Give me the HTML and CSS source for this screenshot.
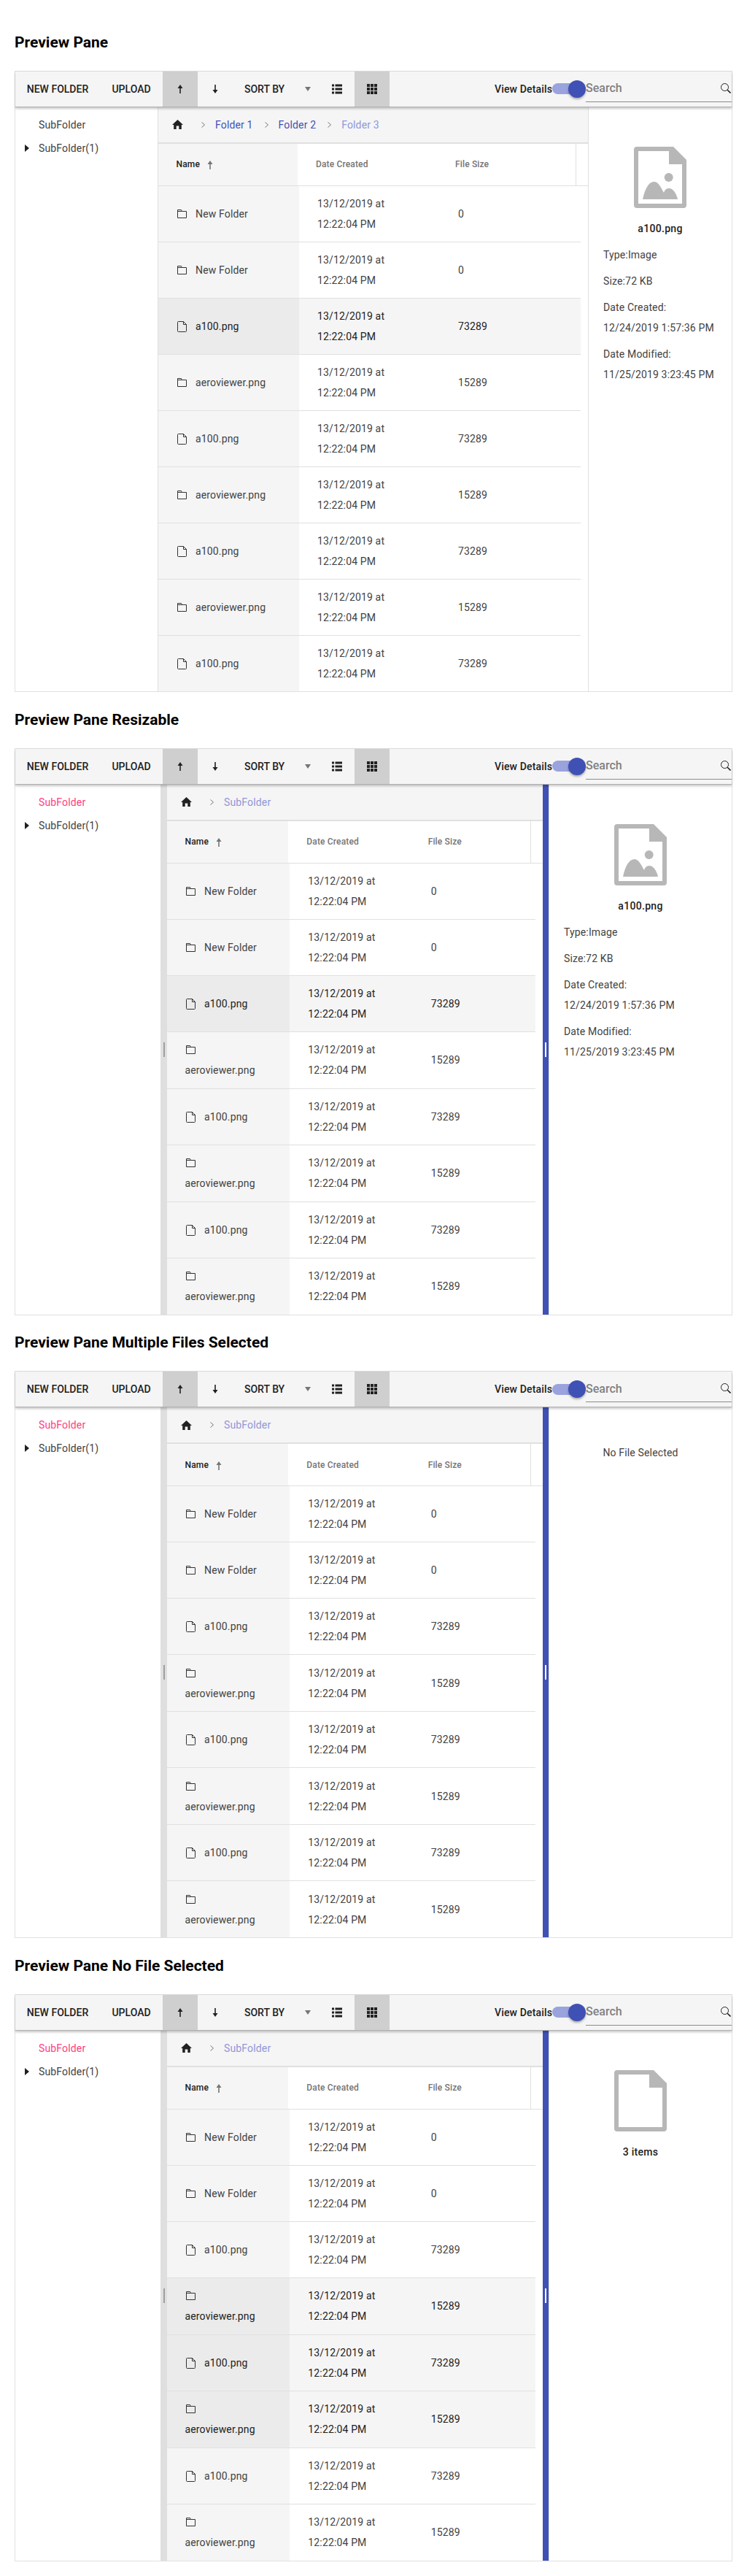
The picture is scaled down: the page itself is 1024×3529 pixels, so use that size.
FILE: index.html
```html
<!DOCTYPE html>
<html lang="en">
  <head>
    <meta charset="UTF-8" />
    <meta name="viewport" content="width=device-width, initial-scale=1.0" />
    <title>Preview Pane</title>
    <link rel="stylesheet" href="styles.css">
  </head>
  <body>
    <svg class="sprite">
      <symbol id="i-up" viewBox="0 0 8 12"><path d="M4 0L7.5 5H4.8V12H3.2V5H.5Z" /></symbol>
      <symbol id="i-down" viewBox="0 0 8 12"><path d="M4 12L7.5 7H4.8V0H3.2V7H.5Z" /></symbol>
      <symbol id="i-list" viewBox="0 0 14 13"><path d="M0 0H3V3H0ZM4.500 0H14V3H4.500ZM0 5H3V8H0ZM4.500 5H14V8H4.500ZM0 10H3V13H0ZM4.500 10H14V13H4.500Z" /></symbol>
      <symbol id="i-grid" viewBox="0 0 14 14"><path d="M0 0H4V4H0ZM5 0H9V4H5ZM10 0H14V4H10ZM0 5H4V9H0ZM5 5H9V9H5ZM10 5H14V9H10ZM0 10H4V14H0ZM5 10H9V14H5ZM10 10H14V14H10Z" /></symbol>
      <symbol id="i-search" viewBox="0 0 14 14"><circle cx="5.500" cy="5.500" r="5" fill="none" stroke="#212121" /><path d="M9.200 9.200L13.500 13.500" stroke="#212121" stroke-width="1.600" /></symbol>
      <symbol id="i-home" viewBox="0 0 15 13"><path d="M7.500 0L15 7H12.800V13H9.300V8.500H5.700V13H2.200V7H0Z" /></symbol>
      <symbol id="i-chev" viewBox="0 0 5 8"><path d="M.5 .5L4.500 4L.5 7.500" fill="none" stroke="#757575" /></symbol>
      <symbol id="i-folder" viewBox="0 0 13 12"><path d="M.5 .5H5.500L6.500 2.500H12.500V11.500H.5ZM.5 2.500H6.500" fill="none" stroke="#333" /></symbol>
      <symbol id="i-file" viewBox="0 0 13 15"><path d="M1.500 .5H8.500L12.500 4.500V13.500A1 1 0 0 1 11.500 14.500H1.500A1 1 0 0 1 .5 13.500V1.500A1 1 0 0 1 1.500 .5ZM8.500 .5V4.500H12.500" fill="none" stroke="#333" /></symbol>
      <symbol id="i-big-image" viewBox="0 0 72 84"><path fill-rule="evenodd" d="M4 0H54L72 18V80A4 4 0 0 1 68 84H4A4 4 0 0 1 0 80V4A4 4 0 0 1 4 0ZM6 6V78H66V24H48V6Z" /><circle cx="47.700" cy="42" r="6" /><path d="M12 72C15 58 20 48 28 48C34 48 38 58 41 63C42 60 44 57 48 57C54 57 58 64 60 72Z" /></symbol>
      <symbol id="i-big-file" viewBox="0 0 72 84"><path fill-rule="evenodd" d="M4 0H54L72 18V80A4 4 0 0 1 68 84H4A4 4 0 0 1 0 80V4A4 4 0 0 1 4 0ZM6 6V78H66V24H48V6Z" /></symbol>
    </svg>

    <div class="page">
      <!-- Preview Pane -->
      <section class="demo">
        <h3>Preview Pane</h3>
        <div class="panel panel-tall">
          <div class="toolbar">
            <button class="tool tool-new">NEW FOLDER</button>
            <button class="tool tool-upload">UPLOAD</button>
            <button class="tool tool-icon active"><svg class="arrow"><use href="#i-up" /></svg></button>
            <button class="tool tool-icon"><svg class="arrow"><use href="#i-down" /></svg></button>
            <button class="tool tool-sort">SORT BY<span class="caret"></span></button>
            <button class="tool tool-icon"><svg class="view-icon"><use href="#i-list" /></svg></button>
            <button class="tool tool-icon active"><svg class="view-icon"><use href="#i-grid" /></svg></button>
            <div class="toolbar-right">
              <span class="details-label">View Details</span>
              <span class="toggle"><span class="thumb"></span></span>
              <div class="search"><span>Search</span><svg class="search-icon"><use href="#i-search" /></svg></div>
            </div>
          </div>
          <div class="content">
            <div class="tree tree-border">
              <div class="tree-item">SubFolder</div>
              <div class="tree-item"><span class="tri"></span>SubFolder(1)</div>
            </div>
            <div class="main">
              <div class="crumbs">
                <svg class="home"><use href="#i-home" /></svg>
                <svg class="sep"><use href="#i-chev" /></svg><span class="crumb">Folder 1</span>
                <svg class="sep"><use href="#i-chev" /></svg><span class="crumb">Folder 2</span>
                <svg class="sep"><use href="#i-chev" /></svg><span class="crumb last">Folder 3</span>
              </div>
              <div class="table-head">
                <div class="th th-name">Name<svg class="sort-arrow"><use href="#i-up" /></svg></div>
                <div class="th">Date Created</div>
                <div class="th th-end">File Size</div>
              </div>
              <div class="row"><div class="td td-name"><div><svg class="ic-folder"><use href="#i-folder" /></svg>New Folder</div></div><div class="td">13/12/2019 at 12:22:04 PM</div><div class="td">0</div></div>
              <div class="row"><div class="td td-name"><div><svg class="ic-folder"><use href="#i-folder" /></svg>New Folder</div></div><div class="td">13/12/2019 at 12:22:04 PM</div><div class="td">0</div></div>
              <div class="row selected"><div class="td td-name"><div><svg class="ic-file"><use href="#i-file" /></svg>a100.png</div></div><div class="td">13/12/2019 at 12:22:04 PM</div><div class="td">73289</div></div>
              <div class="row"><div class="td td-name"><div><svg class="ic-folder"><use href="#i-folder" /></svg>aeroviewer.png</div></div><div class="td">13/12/2019 at 12:22:04 PM</div><div class="td">15289</div></div>
              <div class="row"><div class="td td-name"><div><svg class="ic-file"><use href="#i-file" /></svg>a100.png</div></div><div class="td">13/12/2019 at 12:22:04 PM</div><div class="td">73289</div></div>
              <div class="row"><div class="td td-name"><div><svg class="ic-folder"><use href="#i-folder" /></svg>aeroviewer.png</div></div><div class="td">13/12/2019 at 12:22:04 PM</div><div class="td">15289</div></div>
              <div class="row"><div class="td td-name"><div><svg class="ic-file"><use href="#i-file" /></svg>a100.png</div></div><div class="td">13/12/2019 at 12:22:04 PM</div><div class="td">73289</div></div>
              <div class="row"><div class="td td-name"><div><svg class="ic-folder"><use href="#i-folder" /></svg>aeroviewer.png</div></div><div class="td">13/12/2019 at 12:22:04 PM</div><div class="td">15289</div></div>
              <div class="row"><div class="td td-name"><div><svg class="ic-file"><use href="#i-file" /></svg>a100.png</div></div><div class="td">13/12/2019 at 12:22:04 PM</div><div class="td">73289</div></div>
            </div>
            <div class="preview preview-narrow">
              <svg class="big-icon"><use href="#i-big-image" /></svg>
              <div class="preview-name">a100.png</div>
              <div class="preview-info">
                <p>Type:Image</p>
                <p>Size:72 KB</p>
                <p>Date Created:<br />12/24/2019 1:57:36 PM</p>
                <p>Date Modified:<br />11/25/2019 3:23:45 PM</p>
              </div>
            </div>
          </div>
        </div>
      </section>

      <!-- Preview Pane Resizable -->
      <section class="demo">
        <h3>Preview Pane Resizable</h3>
        <div class="panel panel-split">
          <div class="toolbar">
            <button class="tool tool-new">NEW FOLDER</button>
            <button class="tool tool-upload">UPLOAD</button>
            <button class="tool tool-icon active"><svg class="arrow"><use href="#i-up" /></svg></button>
            <button class="tool tool-icon"><svg class="arrow"><use href="#i-down" /></svg></button>
            <button class="tool tool-sort">SORT BY<span class="caret"></span></button>
            <button class="tool tool-icon"><svg class="view-icon"><use href="#i-list" /></svg></button>
            <button class="tool tool-icon active"><svg class="view-icon"><use href="#i-grid" /></svg></button>
            <div class="toolbar-right">
              <span class="details-label">View Details</span>
              <span class="toggle"><span class="thumb"></span></span>
              <div class="search"><span>Search</span><svg class="search-icon"><use href="#i-search" /></svg></div>
            </div>
          </div>
          <div class="content">
            <div class="tree">
              <div class="tree-item current">SubFolder</div>
              <div class="tree-item"><span class="tri"></span>SubFolder(1)</div>
            </div>
            <div class="splitter"><span class="grip"></span></div>
            <div class="main">
              <div class="crumbs">
                <svg class="home"><use href="#i-home" /></svg>
                <svg class="sep"><use href="#i-chev" /></svg><span class="crumb last">SubFolder</span>
              </div>
              <div class="table-head">
                <div class="th th-name">Name<svg class="sort-arrow"><use href="#i-up" /></svg></div>
                <div class="th">Date Created</div>
                <div class="th th-end">File Size</div>
              </div>
              <div class="row"><div class="td td-name"><div><svg class="ic-folder"><use href="#i-folder" /></svg>New Folder</div></div><div class="td">13/12/2019 at 12:22:04 PM</div><div class="td">0</div></div>
              <div class="row"><div class="td td-name"><div><svg class="ic-folder"><use href="#i-folder" /></svg>New Folder</div></div><div class="td">13/12/2019 at 12:22:04 PM</div><div class="td">0</div></div>
              <div class="row selected"><div class="td td-name"><div><svg class="ic-file"><use href="#i-file" /></svg>a100.png</div></div><div class="td">13/12/2019 at 12:22:04 PM</div><div class="td">73289</div></div>
              <div class="row aero"><div class="td td-name"><div><svg class="ic-folder"><use href="#i-folder" /></svg>aeroviewer.png</div></div><div class="td">13/12/2019 at 12:22:04 PM</div><div class="td">15289</div></div>
              <div class="row"><div class="td td-name"><div><svg class="ic-file"><use href="#i-file" /></svg>a100.png</div></div><div class="td">13/12/2019 at 12:22:04 PM</div><div class="td">73289</div></div>
              <div class="row aero"><div class="td td-name"><div><svg class="ic-folder"><use href="#i-folder" /></svg>aeroviewer.png</div></div><div class="td">13/12/2019 at 12:22:04 PM</div><div class="td">15289</div></div>
              <div class="row"><div class="td td-name"><div><svg class="ic-file"><use href="#i-file" /></svg>a100.png</div></div><div class="td">13/12/2019 at 12:22:04 PM</div><div class="td">73289</div></div>
              <div class="row aero"><div class="td td-name"><div><svg class="ic-folder"><use href="#i-folder" /></svg>aeroviewer.png</div></div><div class="td">13/12/2019 at 12:22:04 PM</div><div class="td">15289</div></div>
            </div>
            <div class="splitter-active"><span class="grip"></span></div>
            <div class="preview">
              <svg class="big-icon"><use href="#i-big-image" /></svg>
              <div class="preview-name">a100.png</div>
              <div class="preview-info">
                <p>Type:Image</p>
                <p>Size:72 KB</p>
                <p>Date Created:<br />12/24/2019 1:57:36 PM</p>
                <p>Date Modified:<br />11/25/2019 3:23:45 PM</p>
              </div>
            </div>
          </div>
        </div>
      </section>

      <!-- Preview Pane Multiple Files Selected -->
      <section class="demo">
        <h3>Preview Pane Multiple Files Selected</h3>
        <div class="panel panel-split">
          <div class="toolbar">
            <button class="tool tool-new">NEW FOLDER</button>
            <button class="tool tool-upload">UPLOAD</button>
            <button class="tool tool-icon active"><svg class="arrow"><use href="#i-up" /></svg></button>
            <button class="tool tool-icon"><svg class="arrow"><use href="#i-down" /></svg></button>
            <button class="tool tool-sort">SORT BY<span class="caret"></span></button>
            <button class="tool tool-icon"><svg class="view-icon"><use href="#i-list" /></svg></button>
            <button class="tool tool-icon active"><svg class="view-icon"><use href="#i-grid" /></svg></button>
            <div class="toolbar-right">
              <span class="details-label">View Details</span>
              <span class="toggle"><span class="thumb"></span></span>
              <div class="search"><span>Search</span><svg class="search-icon"><use href="#i-search" /></svg></div>
            </div>
          </div>
          <div class="content">
            <div class="tree">
              <div class="tree-item current">SubFolder</div>
              <div class="tree-item"><span class="tri"></span>SubFolder(1)</div>
            </div>
            <div class="splitter"><span class="grip"></span></div>
            <div class="main">
              <div class="crumbs">
                <svg class="home"><use href="#i-home" /></svg>
                <svg class="sep"><use href="#i-chev" /></svg><span class="crumb last">SubFolder</span>
              </div>
              <div class="table-head">
                <div class="th th-name">Name<svg class="sort-arrow"><use href="#i-up" /></svg></div>
                <div class="th">Date Created</div>
                <div class="th th-end">File Size</div>
              </div>
              <div class="row"><div class="td td-name"><div><svg class="ic-folder"><use href="#i-folder" /></svg>New Folder</div></div><div class="td">13/12/2019 at 12:22:04 PM</div><div class="td">0</div></div>
              <div class="row"><div class="td td-name"><div><svg class="ic-folder"><use href="#i-folder" /></svg>New Folder</div></div><div class="td">13/12/2019 at 12:22:04 PM</div><div class="td">0</div></div>
              <div class="row"><div class="td td-name"><div><svg class="ic-file"><use href="#i-file" /></svg>a100.png</div></div><div class="td">13/12/2019 at 12:22:04 PM</div><div class="td">73289</div></div>
              <div class="row aero"><div class="td td-name"><div><svg class="ic-folder"><use href="#i-folder" /></svg>aeroviewer.png</div></div><div class="td">13/12/2019 at 12:22:04 PM</div><div class="td">15289</div></div>
              <div class="row"><div class="td td-name"><div><svg class="ic-file"><use href="#i-file" /></svg>a100.png</div></div><div class="td">13/12/2019 at 12:22:04 PM</div><div class="td">73289</div></div>
              <div class="row aero"><div class="td td-name"><div><svg class="ic-folder"><use href="#i-folder" /></svg>aeroviewer.png</div></div><div class="td">13/12/2019 at 12:22:04 PM</div><div class="td">15289</div></div>
              <div class="row"><div class="td td-name"><div><svg class="ic-file"><use href="#i-file" /></svg>a100.png</div></div><div class="td">13/12/2019 at 12:22:04 PM</div><div class="td">73289</div></div>
              <div class="row aero"><div class="td td-name"><div><svg class="ic-folder"><use href="#i-folder" /></svg>aeroviewer.png</div></div><div class="td">13/12/2019 at 12:22:04 PM</div><div class="td">15289</div></div>
            </div>
            <div class="splitter-active"><span class="grip"></span></div>
            <div class="preview">
              <div class="preview-empty">No File Selected</div>
            </div>
          </div>
        </div>
      </section>

      <!-- Preview Pane No File Selected -->
      <section class="demo">
        <h3>Preview Pane No File Selected</h3>
        <div class="panel panel-split">
          <div class="toolbar">
            <button class="tool tool-new">NEW FOLDER</button>
            <button class="tool tool-upload">UPLOAD</button>
            <button class="tool tool-icon active"><svg class="arrow"><use href="#i-up" /></svg></button>
            <button class="tool tool-icon"><svg class="arrow"><use href="#i-down" /></svg></button>
            <button class="tool tool-sort">SORT BY<span class="caret"></span></button>
            <button class="tool tool-icon"><svg class="view-icon"><use href="#i-list" /></svg></button>
            <button class="tool tool-icon active"><svg class="view-icon"><use href="#i-grid" /></svg></button>
            <div class="toolbar-right">
              <span class="details-label">View Details</span>
              <span class="toggle"><span class="thumb"></span></span>
              <div class="search"><span>Search</span><svg class="search-icon"><use href="#i-search" /></svg></div>
            </div>
          </div>
          <div class="content">
            <div class="tree">
              <div class="tree-item current">SubFolder</div>
              <div class="tree-item"><span class="tri"></span>SubFolder(1)</div>
            </div>
            <div class="splitter"><span class="grip"></span></div>
            <div class="main">
              <div class="crumbs">
                <svg class="home"><use href="#i-home" /></svg>
                <svg class="sep"><use href="#i-chev" /></svg><span class="crumb last">SubFolder</span>
              </div>
              <div class="table-head">
                <div class="th th-name">Name<svg class="sort-arrow"><use href="#i-up" /></svg></div>
                <div class="th">Date Created</div>
                <div class="th th-end">File Size</div>
              </div>
              <div class="row"><div class="td td-name"><div><svg class="ic-folder"><use href="#i-folder" /></svg>New Folder</div></div><div class="td">13/12/2019 at 12:22:04 PM</div><div class="td">0</div></div>
              <div class="row"><div class="td td-name"><div><svg class="ic-folder"><use href="#i-folder" /></svg>New Folder</div></div><div class="td">13/12/2019 at 12:22:04 PM</div><div class="td">0</div></div>
              <div class="row"><div class="td td-name"><div><svg class="ic-file"><use href="#i-file" /></svg>a100.png</div></div><div class="td">13/12/2019 at 12:22:04 PM</div><div class="td">73289</div></div>
              <div class="row aero selected"><div class="td td-name"><div><svg class="ic-folder"><use href="#i-folder" /></svg>aeroviewer.png</div></div><div class="td">13/12/2019 at 12:22:04 PM</div><div class="td">15289</div></div>
              <div class="row selected"><div class="td td-name"><div><svg class="ic-file"><use href="#i-file" /></svg>a100.png</div></div><div class="td">13/12/2019 at 12:22:04 PM</div><div class="td">73289</div></div>
              <div class="row aero selected"><div class="td td-name"><div><svg class="ic-folder"><use href="#i-folder" /></svg>aeroviewer.png</div></div><div class="td">13/12/2019 at 12:22:04 PM</div><div class="td">15289</div></div>
              <div class="row"><div class="td td-name"><div><svg class="ic-file"><use href="#i-file" /></svg>a100.png</div></div><div class="td">13/12/2019 at 12:22:04 PM</div><div class="td">73289</div></div>
              <div class="row aero"><div class="td td-name"><div><svg class="ic-folder"><use href="#i-folder" /></svg>aeroviewer.png</div></div><div class="td">13/12/2019 at 12:22:04 PM</div><div class="td">15289</div></div>
            </div>
            <div class="splitter-active"><span class="grip"></span></div>
            <div class="preview">
              <svg class="big-icon"><use href="#i-big-file" /></svg>
              <div class="preview-name">3 items</div>
            </div>
          </div>
        </div>
      </section>
    </div>
  </body>
</html>
```

FILE: styles.css
```css
body {
  font-family: Roboto, sans-serif;
  font-size: 14px;
  margin: 0;
  padding: 0;
  background-color: #fff;
  color: #424242;
}
.sprite {
  display: none;
}
.page {
  padding: 20.33px 20px 20px;
}
.demo {
  margin-top: 25.67px;
}
h3 {
  margin: 0 0 27px;
  font-size: 21px;
  line-height: 24px;
  font-weight: 700;
  color: #000;
}

/* panel */
.panel {
  display: flex;
  flex-direction: column;
  box-sizing: border-box;
  height: 777px;
  border: 1px solid #e0e0e0;
  border-top-color: #dcdcdc;
}
.panel-tall {
  height: 851px;
}
.content {
  display: flex;
  flex: 1;
  min-height: 0;
}

/* toolbar */
.toolbar {
  position: relative;
  z-index: 1;
  display: flex;
  flex: none;
  box-sizing: border-box;
  height: 49px;
  background-color: #f5f5f5;
  border-bottom: 1px solid #b0b0b0;
  box-shadow: 0 2px 3px rgba(0, 0, 0, 0.22);
}
.tool {
  display: flex;
  align-items: center;
  justify-content: center;
  flex: none;
  padding: 0;
  border: none;
  background: none;
  font-family: inherit;
  font-size: 14px;
  font-weight: 500;
  white-space: nowrap;
  color: #212121;
}
.tool-new {
  width: 116px;
}
.tool-upload {
  width: 86px;
}
.tool-icon {
  width: 48px;
}
.tool-sort {
  width: 119px;
  padding-left: 16px;
  justify-content: flex-start;
}
.active {
  background-color: #cfcfcf;
}
.arrow {
  width: 8px;
  height: 12px;
  fill: #212121;
}
.caret {
  margin-left: 28px;
  border-style: solid;
  border-width: 6px 4px 0;
  border-color: #757575 transparent transparent;
}
.view-icon {
  width: 14px;
  height: 14px;
  fill: #212121;
}
.toolbar-right {
  display: flex;
  align-items: center;
  margin-left: auto;
}
.details-label {
  font-weight: 500;
  letter-spacing: 0.15px;
  color: #212121;
}
.toggle {
  position: relative;
  display: block;
  width: 34px;
  height: 15px;
  margin-right: 12px;
  border-radius: 8px;
  background-color: #9aa3dd;
}
.thumb {
  position: absolute;
  top: -4.5px;
  left: 22px;
  width: 24px;
  height: 24px;
  border-radius: 50%;
  background-color: #3f51b5;
  box-shadow: 0 2px 3px rgba(0, 0, 0, 0.3);
}
.search {
  display: flex;
  align-items: center;
  justify-content: space-between;
  box-sizing: border-box;
  width: 200px;
  height: 48px;
  padding: 0 1px 2px 0;
  background: linear-gradient(#8c8c8c, #8c8c8c) 0 41px / 100% 1px no-repeat;
  font-size: 16px;
  font-weight: 500;
  color: #808080;
}
.search-icon {
  width: 14px;
  height: 14px;
}

/* folder tree */
.tree {
  flex: none;
  box-sizing: border-box;
  width: 199px;
  padding-top: 8px;
}
.tree-border {
  width: 196px;
  border-right: 1px solid #e0e0e0;
}
.tree-item {
  position: relative;
  height: 32px;
  padding-left: 32px;
  line-height: 32px;
  letter-spacing: 0.15px;
}
.current {
  color: #ff4081;
}
.tri {
  position: absolute;
  top: 11px;
  left: 13px;
  border-style: solid;
  border-width: 5px 0 5px 6px;
  border-color: transparent transparent transparent #212121;
}

/* splitters */
.splitter,
.splitter-active {
  display: flex;
  flex: none;
  align-items: center;
  justify-content: center;
}
.splitter {
  width: 9px;
  background-color: #dfdfdf;
}
.splitter-active {
  width: 8px;
  background-color: #3f51b5;
}
.grip {
  width: 2px;
  height: 20px;
  background-color: #9e9e9e;
}
.splitter-active .grip {
  background-color: #fff;
}

/* file table */
.main {
  flex: 1;
  min-width: 0;
  overflow: hidden;
}
.crumbs {
  display: flex;
  align-items: center;
  box-sizing: border-box;
  height: 50px;
  padding-left: 19px;
  background-color: #f5f5f5;
  border-bottom: 2px solid #e0e0e0;
}
.home {
  width: 15px;
  height: 13px;
  margin-right: 9px;
  fill: #212121;
}
.sep {
  width: 5px;
  height: 8px;
  margin: 0 14px 0 16px;
}
.crumb {
  letter-spacing: 0.15px;
  color: #3f51b5;
}
.crumb.last {
  color: #8f97d8;
}
.table-head {
  display: grid;
  grid-template-columns: repeat(3, 1fr);
  box-sizing: border-box;
  height: 58px;
  padding-right: 16px;
  border-bottom: 1px solid #e0e0e0;
}
.th {
  display: flex;
  align-items: center;
  padding-left: 25px;
  font-size: 12px;
  font-weight: 500;
  letter-spacing: 0.15px;
  color: #757575;
}
.th-name {
  padding-left: 24.5px;
  background-color: #f5f5f5;
  color: #212121;
}
.th-end {
  border-right: 1px solid #e0e0e0;
}
.sort-arrow {
  width: 8px;
  height: 12px;
  margin: 2px 0 0 10px;
  fill: #757575;
}
.row {
  display: grid;
  grid-template-columns: repeat(3, 1fr);
  box-sizing: border-box;
  height: 77px;
  margin-right: 10px;
  border-bottom: 1px solid #e0e0e0;
  line-height: 28px;
  letter-spacing: 0.15px;
}
.panel-split .aero {
  height: 78px;
}
.td {
  display: flex;
  align-items: center;
  padding: 0 24px 0 25px;
}
.td-name {
  padding-left: 24.5px;
  background-color: #f5f5f5;
}
.selected {
  background-color: #f5f5f5;
  color: #212121;
}
.selected .td-name {
  background-color: #ebebeb;
}
.ic-folder,
.ic-file {
  width: 13px;
  height: 12px;
  margin: 0 12px 0 1.5px;
  vertical-align: -1px;
}
.ic-file {
  height: 15px;
  vertical-align: -3px;
}

/* preview */
.preview {
  flex: none;
  box-sizing: border-box;
  width: 251px;
  border-left: 1px solid #e0e0e0;
  line-height: 28px;
  letter-spacing: 0.15px;
}
.preview-narrow {
  width: 197px;
}
.big-icon {
  display: block;
  width: 72px;
  height: 84px;
  margin: 54px auto 14px;
  fill: #b7b7b7;
}
.preview-name {
  font-weight: 500;
  letter-spacing: 0.3px;
  color: #212121;
  text-align: center;
  margin-bottom: 8px;
}
.preview-info {
  padding-left: 20px;
}
.preview-info p {
  margin: 0 0 8px;
}
.preview-empty {
  padding-top: 48px;
  text-align: center;
}
```
